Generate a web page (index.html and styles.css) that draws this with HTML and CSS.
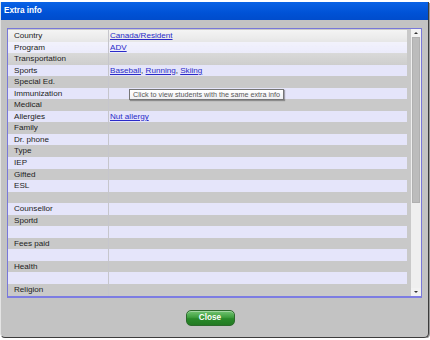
FILE: index.html
```html
<!DOCTYPE html>
<html>
<head>
<meta charset="utf-8">
<link rel="stylesheet" href="styles.css">
</head>
<body>
<div class="dialog">
  <div class="titlebar">Extra info</div>
  <div class="content">
    <div class="box">
      <div class="rows">
        <div class="row fade1"><div class="label">Country</div><div class="value"><a href="#">Canada/Resident</a></div></div>
        <div class="row fade2"><div class="label">Program</div><div class="value"><a href="#">ADV</a></div></div>
        <div class="row fade3"><div class="label">Transportation</div><div class="value"></div></div>
        <div class="row"><div class="label">Sports</div><div class="value"><a href="#">Baseball</a>, <a href="#">Running</a>, <a href="#">Skiing</a></div></div>
        <div class="row"><div class="label">Special Ed.</div><div class="value"></div></div>
        <div class="row"><div class="label">Immunization</div><div class="value"></div></div>
        <div class="row"><div class="label">Medical</div><div class="value"></div></div>
        <div class="row"><div class="label">Allergies</div><div class="value"><a href="#">Nut allergy</a></div></div>
        <div class="row"><div class="label">Family</div><div class="value"></div></div>
        <div class="row"><div class="label">Dr. phone</div><div class="value"></div></div>
        <div class="row"><div class="label">Type</div><div class="value"></div></div>
        <div class="row"><div class="label">IEP</div><div class="value"></div></div>
        <div class="row"><div class="label">Gifted</div><div class="value"></div></div>
        <div class="row"><div class="label">ESL</div><div class="value"></div></div>
        <div class="row"><div class="label"></div><div class="value"></div></div>
        <div class="row"><div class="label">Counsellor</div><div class="value"></div></div>
        <div class="row"><div class="label">Sportd</div><div class="value"></div></div>
        <div class="row"><div class="label"></div><div class="value"></div></div>
        <div class="row"><div class="label">Fees paid</div><div class="value"></div></div>
        <div class="row"><div class="label"></div><div class="value"></div></div>
        <div class="row"><div class="label">Health</div><div class="value"></div></div>
        <div class="row"><div class="label"></div><div class="value"></div></div>
        <div class="row"><div class="label">Religion</div><div class="value"></div></div>
      </div>
      <div class="scrollbar">
        <div class="sb-btn"><span class="arrow-up"></span></div>
        <div class="sb-thumb"></div>
        <div class="sb-track"></div>
        <div class="sb-btn"><span class="arrow-down"></span></div>
      </div>
    </div>
    <div class="footer"><button class="close">Close</button></div>
  </div>
  <div class="tooltip">Click to view students with the same extra info</div>
</div>
</body>
</html>
```

FILE: styles.css
```css
html, body {
  margin: 0;
  padding: 0;
  background: #ffffff;
}
body {
  padding-top: 2px;
  font-family: "Liberation Sans", Arial, sans-serif;
}
.dialog {
  position: relative;
  box-sizing: border-box;
  width: 429px;
  height: 336px;
  background: #c3c3c3;
  border-left: 1px solid #e4e4e4;
  border-right: 1px solid #3c3c3c;
  border-bottom: 1px solid #3c3c3c;
  border-radius: 0 0 5px 5px;
  box-shadow: 1px 1px 0 #9a9a9a;
  display: flex;
  flex-direction: column;
}
.titlebar {
  height: 18px;
  line-height: 17px;
  background: linear-gradient(#0a63e6, #0052d6 60%, #004ccc);
  color: #ffffff;
  font-weight: bold;
  font-size: 8.2px;
  padding-left: 3px;
}
.content {
  flex: 1;
  display: flex;
  flex-direction: column;
  padding: 8px 5px 0 6px;
}
.box {
  box-sizing: border-box;
  width: 415px;
  height: 270px;
  border: 1px solid #7878d8;
  border-bottom: 2px solid #7c7ce2;
  background: #c9c9c9;
  display: flex;
  gap: 4px;
}
.rows {
  width: 399px;
  padding-top: 1px;
  overflow: hidden;
}
.row {
  display: flex;
  height: 11.56px;
  line-height: 11.56px;
  font-size: 8.1px;
  color: #222222;
  background: #c9c9c9;
}
.row:nth-child(even) {
  background: #e5e5fa;
}
.row.fade1 {
  background: linear-gradient(rgba(255,255,255,0.8), rgba(255,255,255,0.55)), #c9c9c9;
}
.row.fade2 {
  background: linear-gradient(rgba(255,255,255,0.5), rgba(255,255,255,0.25)), #e5e5fa;
}
.row.fade3 {
  background: linear-gradient(rgba(255,255,255,0.3), rgba(255,255,255,0.08)), #c9c9c9;
}
.label {
  box-sizing: border-box;
  width: 100px;
  padding-left: 6px;
  white-space: nowrap;
}
.value {
  flex: 1;
  border-left: 1px solid #c6c6cc;
  padding-left: 1px;
  white-space: nowrap;
}
.value a {
  color: #2a2ac8;
  text-decoration: underline;
}
.scrollbar {
  width: 10px;
  display: flex;
  flex-direction: column;
  background: #efefef;
}
.sb-btn {
  height: 8px;
  display: flex;
  align-items: center;
  justify-content: center;
  background: #f2f2f2;
}
.arrow-up {
  width: 0;
  height: 0;
  border-left: 2px solid transparent;
  border-right: 2px solid transparent;
  border-bottom: 2px solid #333;
}
.arrow-down {
  width: 0;
  height: 0;
  border-left: 2px solid transparent;
  border-right: 2px solid transparent;
  border-top: 2px solid #333;
}
.sb-thumb {
  height: 166px;
  margin: 0 1px;
  background: #bcbcbc;
  border: 1px solid #b0b0b0;
  box-sizing: border-box;
}
.sb-track {
  flex: 1;
}
.footer {
  display: flex;
  justify-content: center;
  padding-top: 12px;
  padding-right: 10px;
}
.close {
  box-sizing: border-box;
  width: 49px;
  height: 16px;
  padding: 0;
  border: 1px solid #2c6a2c;
  border-radius: 5px;
  background: linear-gradient(#72c472, #3f9f3f 45%, #2a8a2a 55%, #237a23);
  box-shadow: inset 0 1px 0 rgba(255,255,255,0.35);
  color: #ffffff;
  font-family: "Liberation Sans", Arial, sans-serif;
  font-weight: bold;
  font-size: 8.2px;
  line-height: 14px;
}
.tooltip {
  position: absolute;
  left: 128px;
  top: 87px;
  box-sizing: border-box;
  height: 11px;
  padding: 0 3px;
  border: 1px solid #767676;
  background: linear-gradient(#ffffff, #f0f0f4);
  box-shadow: 1px 1px 1px rgba(0,0,0,0.3);
  color: #575757;
  font-size: 7.2px;
  line-height: 9px;
  white-space: nowrap;
}
```
